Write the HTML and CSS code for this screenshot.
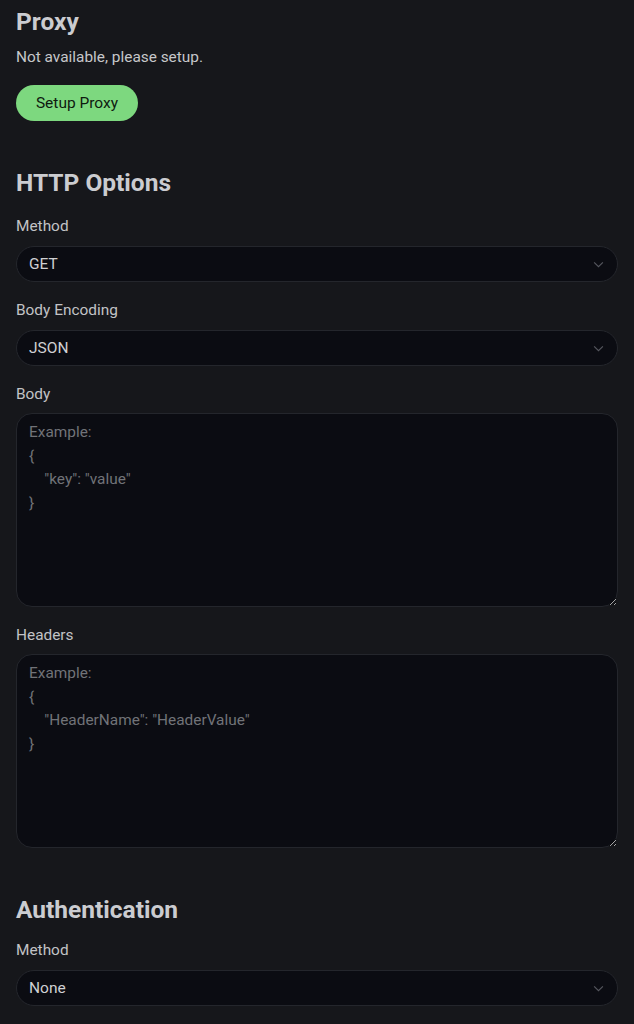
FILE: index.html
```html
<!DOCTYPE html>
<html lang="en">
<head>
<meta charset="utf-8">
<title>Proxy &amp; HTTP Options</title>
<link rel="stylesheet" href="styles.css">
</head>
<body>
<main class="page">
  <section class="section">
    <h2 class="heading">Proxy</h2>
    <p class="desc">Not available, please setup.</p>
    <button class="btn-green" type="button">Setup Proxy</button>
  </section>

  <section class="section gap-top">
    <h2 class="heading">HTTP Options</h2>
    <div class="field">
      <label class="label">Method</label>
      <div class="select-wrap">
        <select class="select"><option>GET</option><option>POST</option></select>
        <svg class="chev" viewBox="0 0 12 8" width="11" height="7"><path d="M1 1.5 6 6.5 11 1.5" fill="none" stroke="currentColor" stroke-width="1.3"/></svg>
      </div>
    </div>
    <div class="field">
      <label class="label">Body Encoding</label>
      <div class="select-wrap">
        <select class="select"><option>JSON</option></select>
        <svg class="chev" viewBox="0 0 12 8" width="11" height="7"><path d="M1 1.5 6 6.5 11 1.5" fill="none" stroke="currentColor" stroke-width="1.3"/></svg>
      </div>
    </div>
    <div class="field area">
      <label class="label">Body</label>
      <textarea class="textarea" placeholder="Example:&#10;{&#10;    &quot;key&quot;: &quot;value&quot;&#10;}"></textarea>
    </div>
    <div class="field area">
      <label class="label">Headers</label>
      <textarea class="textarea" placeholder="Example:&#10;{&#10;    &quot;HeaderName&quot;: &quot;HeaderValue&quot;&#10;}"></textarea>
    </div>
  </section>

  <section class="section gap-top2">
    <h2 class="heading">Authentication</h2>
    <div class="field first-auth">
      <label class="label">Method</label>
      <div class="select-wrap">
        <select class="select"><option>None</option></select>
        <svg class="chev" viewBox="0 0 12 8" width="11" height="7"><path d="M1 1.5 6 6.5 11 1.5" fill="none" stroke="currentColor" stroke-width="1.3"/></svg>
      </div>
    </div>
  </section>
</main>
</body>
</html>
```

FILE: styles.css
```css
* { box-sizing: border-box; }
html, body {
  margin: 0;
  padding: 0;
  background: #16171b;
  color: #c8c9cc;
  font-family: Roboto, "Noto Sans", "Liberation Sans", sans-serif;
}
.page {
  padding: 6px 16px 20px 16px;
}
.section { display: flex; flex-direction: column; }
.gap-top { margin-top: 46px; }
.gap-top2 { margin-top: 46px; }
.heading {
  margin: 0;
  font-size: 24.5px;
  line-height: 32px;
  font-weight: 700;
  color: #cbccd0;
}
.desc {
  margin: 9px 0 0 0;
  font-size: 15.4px;
  line-height: 20px;
  color: #c6c7ca;
}
.btn-green {
  align-self: flex-start;
  margin-top: 18px;
  height: 36px;
  width: 122px;
  border: none;
  border-radius: 18px;
  background: #7dd87f;
  color: #0f1a10;
  font-family: inherit;
  font-size: 15.5px;
  font-weight: 400;
  padding: 0;
}
.field {
  display: flex;
  flex-direction: column;
  gap: 10px;
  margin-top: 17px;
}
.field + .field { margin-top: 18px; }
.field.area { gap: 9px; margin-top: 18px; }
.field.first-auth { margin-top: 14px; }
.label {
  font-size: 15.4px;
  line-height: 20px;
  font-weight: 400;
  color: #c2c3c6;
}
.select-wrap { position: relative; }
.select {
  appearance: none;
  -webkit-appearance: none;
  width: 100%;
  height: 36px;
  border: 1px solid #24262c;
  border-radius: 18px;
  background: #0b0c12;
  color: #cfd0d3;
  font-family: inherit;
  font-size: 15.5px;
  font-weight: 400;
  padding: 0 12px;
  outline: none;
}
.chev {
  position: absolute;
  right: 14px;
  top: 15px;
  color: #55575e;
  pointer-events: none;
}
.textarea {
  width: 100%;
  height: 194px;
  border: 1px solid #24262c;
  border-radius: 16px;
  background: #0b0c12;
  color: #cfd0d3;
  font-family: inherit;
  font-size: 15.4px;
  line-height: 23.5px;
  padding: 7px 12px;
  outline: none;
  resize: vertical;
}
.textarea::placeholder {
  color: #717378;
}
```
